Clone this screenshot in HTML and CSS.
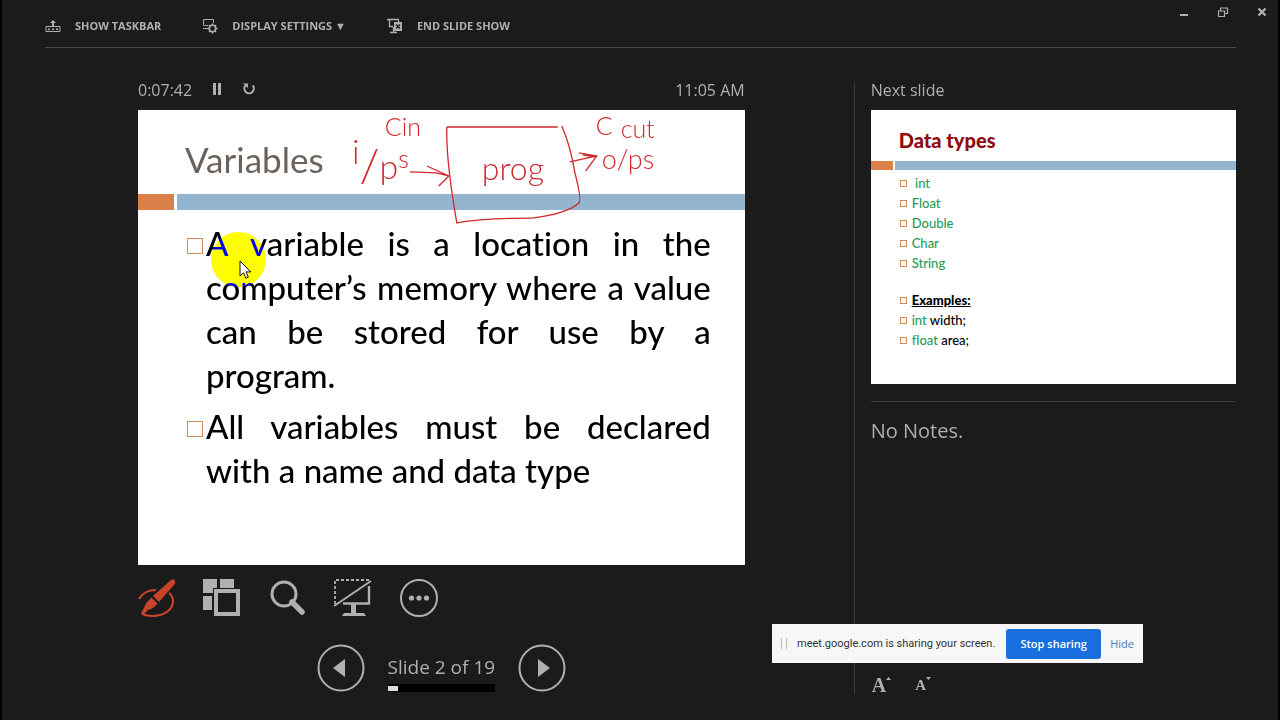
FILE: index.html
```html
<!DOCTYPE html>
<html lang="en">
<head>
<meta charset="utf-8">
<title>Presenter View</title>
<link rel="stylesheet" href="styles.css">
</head>
<body>
<div class="presenter">

<header class="topbar">
  <button class="tool" type="button">
    <svg width="16" height="16" viewBox="0 0 16 16"><path d="M8 2l3 3H9v3H7V5H5z" fill="currentColor"/><path d="M1 8.500h14v5H1z" fill="none" stroke="currentColor"/><path d="M3 10.500h2v1.500H3zM7 10.500h2v1.500H7zM11 10.500h2v1.500h-2z" fill="currentColor"/></svg>
    SHOW TASKBAR
  </button>
  <button class="tool" type="button">
    <svg width="16" height="16" viewBox="0 0 16 16"><path d="M1.500 7V1.500h10V5M1.500 7.500H6M1 10.500h5" fill="none" stroke="currentColor"/><circle cx="10.500" cy="10.500" r="3.200" fill="none" stroke="currentColor" stroke-width="1.600"/><path d="M10.500 5.500v2M10.500 13.500v2M5.500 10.500h2M13.500 10.500h2M7 7l1.300 1.300M12.700 12.700L14 14M14 7l-1.300 1.300M7 14l1.300-1.300" stroke="currentColor" stroke-width="1.600"/></svg>
    DISPLAY SETTINGS &#9660;
  </button>
  <button class="tool" type="button">
    <svg width="16" height="16" viewBox="0 0 16 16"><path d="M0 1.500h12M2.500 2v6.500H6M6.500 9v5M3 14.500h7M11.500 2v2" fill="none" stroke="currentColor" stroke-width="1.300"/><path d="M7 4h8v9H7z" fill="currentColor"/><path d="M9 6.500l4 4M13 6.500l-4 4" stroke="#1b1b1b" stroke-width="1.300"/></svg>
    END SLIDE SHOW
  </button>
</header>

<div class="window-buttons">
  <button type="button" aria-label="Minimize"><svg width="12" height="12" viewBox="0 0 12 12"><path d="M2 8h8v2H2z" fill="currentColor"/></svg></button>
  <button type="button" aria-label="Restore"><svg width="12" height="12" viewBox="0 0 12 12"><path d="M1.500 5h6v5.500h-6zM3.500 5V2h7v5.500h-3M1 5h7M3 2h8" fill="none" stroke="currentColor" stroke-width="1.200"/></svg></button>
  <button type="button" aria-label="Close"><svg width="12" height="12" viewBox="0 0 12 12"><path d="M2.500 2.500l7 7M9.500 2.500l-7 7" stroke="currentColor" stroke-width="2.400"/></svg></button>
</div>

<main class="stage">
  <section class="current">
    <div class="timer">
      <span>0:07:42</span>
      <button type="button" aria-label="Pause"><svg width="12" height="14" viewBox="0 0 12 14"><path d="M2 1h3v12H2zM7 1h3v12H7z" fill="currentColor"/></svg></button>
      <button type="button" aria-label="Restart"><svg width="14" height="14" viewBox="0 0 14 14"><path d="M3.500 3.500a4.700 4.700 0 1 0 7.200 0" fill="none" stroke="currentColor" stroke-width="2"/><path d="M1 1.500h5V6z" fill="currentColor"/></svg></button>
      <span class="clock">11:05 AM</span>
    </div>

    <article class="slide">
      <h1>Variables</h1>
      <div class="rule"></div>
      <ul>
        <li>A variable is a location in the computer’s memory where a value can be stored for use by a program.</li>
        <li>All variables must be declared with&nbsp;a name and data type</li>
      </ul>
      <div class="spotlight"></div>
      <svg class="ink" viewBox="0 0 607 455">
        <g class="strokes">
          <path d="M309 17L420 17M424 16C428 25 434 44 437 62C441 78 444 92 441 93C432 102 410 106 396 108C372 109 350 107 319 113C315 90 308 50 309 17"/>
          <path d="M272 62L298 63L311 66M289 56L311 66L301 76"/>
          <path d="M432 52L459 46M441 43L459 46L448 61M445 45L457 47"/>
        </g>
        <g class="words">
          <text x="247" y="26" font-size="25">Cin</text>
          <text x="214" y="54" font-size="34">i<tspan dy="18" font-size="46">/</tspan><tspan dy="-3" font-size="34">p</tspan><tspan dy="-11" font-size="25">s</tspan></text>
          <text x="344" y="70" font-size="32">prog</text>
          <text x="458" y="25" font-size="25">C<tspan dx="8" dy="3" font-size="25">cut</tspan></text>
          <text x="464" y="59" font-size="27">o/ps</text>
        </g>
      </svg>
      <svg class="pointer" width="13" height="20" viewBox="0 0 13 20"><path d="M1 1v15l3.500-3.200 2.300 5.400 2.500-1-2.300-5.300h4.800z" fill="#fff" stroke="#111"/></svg>
    </article>

    <div class="tools">
      <button type="button" class="pen" aria-label="Pen and laser pointer tools">
        <svg width="40" height="40" viewBox="0 0 40 40"><path d="M1 21C5 14 12 12 18 12M31 15C37 20 36 28 30 33C23 39 11 39 4 36" fill="none" stroke="currentColor" stroke-width="2.200"/><path d="M33 2q3-2 4 1q1 2-1 4L21 24l-6-6zM13.500 19.500l6 6C16 30 13 31 10 32l-5 5-2-2 3-5c1-4 4-7 7.500-10.500z" fill="currentColor"/></svg>
      </button>
      <button type="button" aria-label="See all slides">
        <svg width="40" height="40" viewBox="0 0 40 40"><path d="M0 1h14v9h-4v5H0zM17 1h14v9H17zM0 18h9v14H0z" fill="currentColor"/><path d="M13 13h22v23H13z" fill="none" stroke="currentColor" stroke-width="4"/></svg>
      </button>
      <button type="button" aria-label="Zoom into the slide">
        <svg width="40" height="40" viewBox="0 0 40 40"><circle cx="16" cy="16" r="12" fill="none" stroke="currentColor" stroke-width="3"/><path d="M24 24l10 10" stroke="currentColor" stroke-width="5.500" stroke-linecap="round"/></svg>
      </button>
      <button type="button" aria-label="Black or unblack slide show">
        <svg width="40" height="40" viewBox="0 0 40 40"><path d="M2 26V2h34" fill="none" stroke="currentColor" stroke-width="1.800" stroke-dasharray="3 2"/><path d="M1 28L38 3" stroke="currentColor" stroke-width="2"/><path d="M36 8v17.500H10" fill="none" stroke="currentColor" stroke-width="2.400"/><path d="M18 26h5v9h8l2 3H9l2-3h7z" fill="currentColor"/></svg>
      </button>
      <button type="button" aria-label="More slide show options">
        <svg width="40" height="40" viewBox="0 0 40 40"><circle cx="21" cy="20" r="18" fill="none" stroke="currentColor" stroke-width="2"/><circle cx="13.500" cy="20" r="2.600" fill="currentColor"/><circle cx="21" cy="20" r="2.600" fill="currentColor"/><circle cx="28.500" cy="20" r="2.600" fill="currentColor"/></svg>
      </button>
    </div>

    <nav class="pager">
      <button type="button" aria-label="Previous slide"><svg width="48" height="48" viewBox="0 0 48 48"><circle cx="24" cy="24" r="22.500" fill="none" stroke="currentColor" stroke-width="2"/><path d="M28 15v18L16 24z" fill="currentColor"/></svg></button>
      <div class="count">
        <span>Slide 2 of 19</span>
        <div class="progress"><div class="done" style="width: 10%"></div></div>
      </div>
      <button type="button" aria-label="Next slide"><svg width="48" height="48" viewBox="0 0 48 48"><circle cx="24" cy="24" r="22.500" fill="none" stroke="currentColor" stroke-width="2"/><path d="M20 15v18l12-9z" fill="currentColor"/></svg></button>
    </nav>
  </section>

  <aside class="side">
    <h2>Next slide</h2>
    <article class="slide next">
      <h1>Data types</h1>
      <div class="rule"></div>
      <ul>
        <li class="type">&nbsp;int</li>
        <li class="type">Float</li>
        <li class="type">Double</li>
        <li class="type">Char</li>
        <li class="type">String</li>
        <li class="blank"></li>
        <li><b>Examples:</b></li>
        <li><span class="type">int</span> width;</li>
        <li><span class="type">float</span> area;</li>
      </ul>
    </article>
    <p class="notes">No Notes.</p>
    <div class="zoom">
      <button type="button" class="bigger" aria-label="Make the text larger">A<svg width="5" height="3" viewBox="0 0 5 3"><path d="M0 3L2.500 0L5 3z" fill="currentColor"/></svg></button>
      <button type="button" class="smaller" aria-label="Make the text smaller">A<svg width="5" height="3" viewBox="0 0 5 3"><path d="M0 0h5L2.500 3z" fill="currentColor"/></svg></button>
    </div>
  </aside>
</main>
</div>

<div class="share">
  <span class="grip"></span>
  <span class="message">meet.google.com is sharing your screen.</span>
  <button type="button">Stop sharing</button>
  <a href="#">Hide</a>
</div>
</body>
</html>
```
FILE: styles.css
```css
*, *::before {
  box-sizing: border-box;
}
body {
  margin: 0;
  background: #1b1b1b;
  color: #b0b0b0;
  font-family: "Open Sans", "Noto Sans", sans-serif;
  font-size: 16px;
}
button {
  padding: 0;
  border: 0;
  background: none;
  color: inherit;
  font: inherit;
  cursor: pointer;
}
svg {
  display: block;
}
h1, h2, ul, p {
  margin: 0;
  padding: 0;
}

.presenter {
  display: flex;
  flex-direction: column;
  min-height: 100vh;
  padding: 0 42px 27px 43px;
  border: solid #000;
  border-width: 0 2px;
}

/* top bar */
.topbar {
  display: flex;
  gap: 41px;
  height: 48px;
  padding-top: 4px;
  border-bottom: 1px solid #4a4a4a;
}
.tool {
  display: flex;
  align-items: center;
  gap: 14px;
  font-size: 11px;
  font-weight: 700;
}
.window-buttons {
  position: absolute;
  top: 6px;
  right: 12px;
  display: flex;
  gap: 27px;
}

/* two columns */
.stage {
  flex: 1;
  display: grid;
  grid-template-columns: 679fr 321fr;
  padding-top: 34px;
}
.current {
  padding: 0 109px 0 93px;
}
.side {
  display: flex;
  flex-direction: column;
  padding-left: 16px;
  border-left: 1px solid #3c3c3c;
}
.timer, .side h2 {
  height: 28px;
  line-height: 16px;
}
.side h2 {
  font-size: 16px;
  font-weight: 400;
}
.timer {
  display: flex;
  align-items: flex-start;
  gap: 19px;
}
.clock {
  margin-left: auto;
}

/* slides */
.slide {
  position: relative;
  aspect-ratio: 4 / 3;
  background: #fff;
  color: #000;
  font-family: Lato, sans-serif;
  font-variant-ligatures: none;
}
.slide h1 {
  height: 84px;
  padding: 29px 0 0 47px;
  color: #6b625c;
  font-size: 35px;
  font-weight: 400;
  line-height: 40px;
}
.rule {
  height: 16px;
  background: linear-gradient(90deg, #d98148 6%, #fff 6%, #fff 6.500%, #94b5d0 6.500%);
}
.slide ul {
  padding: 11px 34px 0 68px;
  list-style: none;
  font-size: 33px;
  font-weight: 500;
  line-height: 44px;
}
.slide li {
  position: relative;
  margin-bottom: 7px;
  text-align: justify;
}
.slide li::before {
  content: "";
  position: absolute;
  top: 17px;
  left: -19px;
  width: 16px;
  height: 16px;
  border: 1px solid #d08a5c;
}
.spotlight {
  position: absolute;
  top: 122px;
  left: 73px;
  width: 55px;
  height: 55px;
  border-radius: 50%;
  background: #00f;
  mix-blend-mode: difference;
}
.pointer {
  position: absolute;
  top: 150px;
  left: 101px;
}
.ink {
  position: absolute;
  inset: 0;
}
.strokes {
  fill: none;
  stroke: #d0282c;
  stroke-width: 1.300;
}
.words {
  fill: #d0282c;
  font-weight: 300;
}

.next h1 {
  height: 51px;
  padding: 19px 0 0 28px;
  color: #900c10;
  font-size: 20px;
  font-weight: 900;
  line-height: 22px;
}
.next .rule {
  height: 9px;
}
.next ul {
  padding: 3px 20px 0 41px;
  font-size: 13px;
  line-height: 20px;
}
.next li {
  height: 20px;
  margin: 0;
}
.next li::before {
  top: 7px;
  left: -12px;
  width: 7px;
  height: 7px;
}
.next .blank {
  height: 17px;
}
.next .blank::before {
  content: none;
}
.next b {
  font-weight: 900;
  text-decoration: underline;
}
.type {
  color: #1f9d5a;
}

/* controls under the slide */
.tools {
  display: flex;
  gap: 25px;
  padding-top: 13px;
}
.pen {
  color: #c8452a;
}
.pager {
  display: flex;
  justify-content: center;
  align-items: center;
  gap: 23px;
  padding-top: 26px;
}
.count {
  padding-top: 10px;
  font-size: 19px;
  line-height: 24px;
}
.progress {
  height: 8px;
  margin-top: 5px;
  padding: 2px 0;
  background: #000;
}
.done {
  height: 5px;
  background: #dcdcdc;
}

.notes {
  margin-top: 17px;
  padding-top: 15px;
  border-top: 1px solid #3c3c3c;
  font-size: 20px;
  line-height: 28px;
}
.zoom {
  display: flex;
  align-items: flex-end;
  gap: 24px;
  margin-top: auto;
  padding-left: 1px;
  font-family: "Liberation Serif", serif;
  font-weight: 700;
}
.zoom button {
  display: flex;
  line-height: 16px;
}
.bigger {
  font-size: 20px;
}
.smaller {
  font-size: 15px;
}

/* screen sharing notice */
.share {
  position: fixed;
  right: 137px;
  bottom: 57px;
  display: flex;
  align-items: center;
  width: 371px;
  height: 39px;
  padding: 0 9px;
  background: #f7f7f7;
  color: #333;
  font-size: 11px;
  white-space: nowrap;
}
.grip {
  width: 6px;
  height: 11px;
  margin-right: 10px;
  border: solid #bbb;
  border-width: 0 1px;
}
.message {
  font-family: Roboto, sans-serif;
}
.share button {
  width: 95px;
  height: 30px;
  margin: 0 9px 0 auto;
  border-radius: 3px;
  background: #1a6fe0;
  color: #fff;
  font-weight: 600;
}
.share a {
  color: #4478b8;
  text-decoration: none;
}
```
